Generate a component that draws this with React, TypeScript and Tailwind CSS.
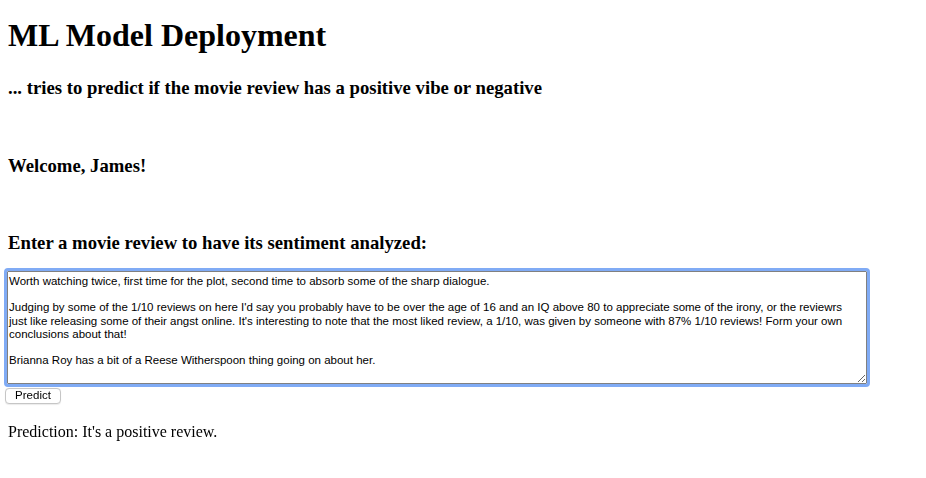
import { useEffect, useRef, useState } from "react";

const initialReview = `Worth watching twice, first time for the plot, second time to absorb some of the sharp dialogue.

Judging by some of the 1/10 reviews on here I'd say you probably have to be over the age of 16 and an IQ above 80 to appreciate some of the irony, or the reviewrs just like releasing some of their angst online. It's interesting to note that the most liked review, a 1/10, was given by someone with 87% 1/10 reviews! Form your own conclusions about that!

Brianna Roy has a bit of a Reese Witherspoon thing going on about her.`;

const App = () => {
  const [review, setReview] = useState<string>(initialReview);
  const [prediction, setPrediction] = useState<string>("It's a positive review.");
  const areaRef = useRef<HTMLTextAreaElement>(null);

  useEffect(() => {
    const el = areaRef.current;
    if (!el) return;
    el.focus();
    el.setSelectionRange(el.value.length, el.value.length);
  }, []);

  const onPredict = () => {
    setPrediction(review.trim() ? "It's a positive review." : "Please enter a review.");
  };

  return (
    <div className="min-h-screen bg-white text-black pl-2 font-['Liberation_Serif',_'Times_New_Roman',_serif]">
      <h1 className="mt-[17px] text-[32px] leading-[36px] font-bold">ML Model Deployment</h1>
      <h3 className="mt-[24px] text-[18.72px] leading-[22px] font-bold">
        ... tries to predict if the movie review has a positive vibe or negative
      </h3>

      <h3 className="mt-[56px] text-[18.72px] leading-[22px] font-bold">Welcome, James!</h3>

      <h3 className="mt-[55px] text-[18.72px] leading-[22px] font-bold">
        Enter a movie review to have its sentiment analyzed:
      </h3>

      <textarea
        ref={areaRef}
        className="block mt-[17px] ml-[-1px] w-[860px] h-[113px] border border-[#808080] rounded-[1px] bg-white pt-[3px] pl-[1px] pr-[4px] text-[11.5px] leading-[13.2px] text-black caret-[#1f6ff0] outline-[3px] outline-solid outline-[#80abf5] focus:outline-[3px] focus:outline-solid focus:outline-[#80abf5] font-['Liberation_Sans',_Arial,_sans-serif]"
        value={review}
        onChange={(e) => setReview(e.target.value)}
      />
      <button
        className="mt-[4px] ml-[-3px] flex items-center justify-center w-[56px] h-[16px] border border-[#c6c6c6] rounded-[4px] bg-white text-[11.5px] leading-none text-black shadow-[0_0.5px_1px_rgba(0,0,0,0.08)] font-['Liberation_Sans',_Arial,_sans-serif]"
        onClick={onPredict}
      >
        Predict
      </button>

      <p className="mt-[19px] text-[16px] leading-[18px]">Prediction: {prediction}</p>
    </div>
  );
};

export default App;
